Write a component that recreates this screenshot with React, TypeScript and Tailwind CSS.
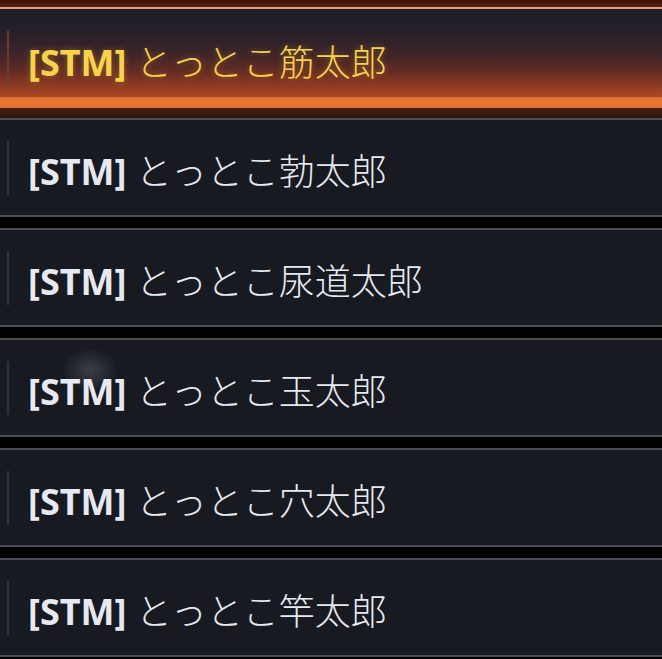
import React from 'react';

interface Entry {
    tag: string;
    name: string;
    glow?: boolean;
}

const entries: Entry[] = [
    { tag: '[STM]', name: 'とっとこ勃太郎' },
    { tag: '[STM]', name: 'とっとこ尿道太郎' },
    { tag: '[STM]', name: 'とっとこ玉太郎', glow: true },
    { tag: '[STM]', name: 'とっとこ穴太郎' },
    { tag: '[STM]', name: 'とっとこ竿太郎' },
];

const fontStack = "font-['Noto_Sans','Noto_Sans_CJK_JP',sans-serif]";

const Label: React.FC<{ tag: string; name: string; selected?: boolean }> = ({ tag, name, selected }) => (
    <div
        className={`${fontStack} text-[36px] leading-none whitespace-nowrap pt-[9px] ${
            selected ? 'text-[#f7d24c] [text-shadow:0_0_6px_rgba(250,200,60,0.35)]' : 'text-[#e6e9f0]'
        }`}
    >
        <span className="font-bold">{tag}</span>
        <span className="font-light"> {name}</span>
    </div>
);

const Row: React.FC<{ entry: Entry }> = ({ entry }) => (
    <div className="relative h-[99px] border-y-2 border-[#4a4d55] bg-[#171a21] flex items-center overflow-hidden">
        {entry.glow && (
            <div className="absolute left-[62px] top-[8px] w-[56px] h-[44px] rounded-full bg-[radial-gradient(closest-side,rgba(255,255,255,0.16),rgba(255,255,255,0))]" />
        )}
        <div className="w-[2px] h-[54px] ml-[7px] bg-[#30333a]" />
        <div className="ml-[19px]">
            <Label tag={entry.tag} name={entry.name} />
        </div>
    </div>
);

const App: React.FC = () => {
    return (
        <div className="w-[662px] h-[659px] bg-black overflow-hidden">
            {/* previous entry edge */}
            <div className="h-[7px] bg-gradient-to-b from-[#3f130c] to-[#5c2012]" />
            <div className="h-[2px] bg-[#e39c78]" />

            {/* selected row */}
            <div className="relative h-[88px] flex items-center bg-[linear-gradient(to_bottom,#1d1e25_0%,#27212a_28%,#3f2429_52%,#6a2d22_74%,#963e22_90%,#ad4824_100%)]">
                <div className="w-[2px] h-[54px] ml-[7px] mt-[10px] bg-[#6a3a2e]" />
                <div className="ml-[19px] mt-[10px]">
                    <Label tag="[STM]" name="とっとこ筋太郎" selected />
                </div>
            </div>
            <div className="h-[11px] bg-[linear-gradient(to_bottom,#e06a2e,#e87a36_40%,#df7030)]" />
            <div className="h-[10px] bg-[linear-gradient(to_bottom,#4a200e,#2a140c)]" />

            <div className="flex flex-col gap-[11px]">
                {entries.map((e, i) => (
                    <Row key={i} entry={e} />
                ))}
            </div>
        </div>
    );
};

export default App;
